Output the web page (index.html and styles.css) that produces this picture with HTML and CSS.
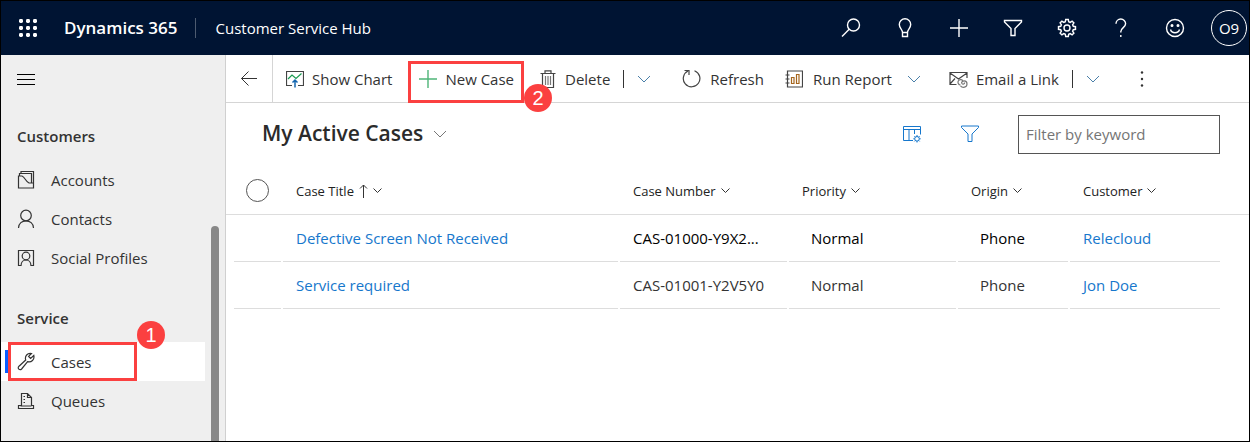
FILE: index.html
```html
<!DOCTYPE html>
<html lang="en">
<head>
<meta charset="utf-8">
<title>My Active Cases - Customer Service Hub</title>
<link rel="stylesheet" href="styles.css">
</head>
<body>
<div class="app">
  <header class="topbar">
    <button class="waffle" aria-label="App launcher">
      <svg width="18" height="18" viewBox="0 0 18 18"><rect x="0" y="0" width="4" height="4" rx="1.4"/><rect x="7" y="0" width="4" height="4" rx="1.4"/><rect x="14" y="0" width="4" height="4" rx="1.4"/><rect x="0" y="7" width="4" height="4" rx="1.4"/><rect x="7" y="7" width="4" height="4" rx="1.4"/><rect x="14" y="7" width="4" height="4" rx="1.4"/><rect x="0" y="14" width="4" height="4" rx="1.4"/><rect x="7" y="14" width="4" height="4" rx="1.4"/><rect x="14" y="14" width="4" height="4" rx="1.4"/></svg>
    </button>
    <a class="brand" href="#">Dynamics 365</a>
    <a class="app-name" href="#">Customer Service Hub</a>
    <nav class="tools" aria-label="Global tools">
      <button class="tool" aria-label="Search"><svg width="20" height="20" viewBox="0 0 20 20"><circle cx="12.5" cy="7" r="6"/><path d="M8.200 11.300 1 18.500"/></svg></button>
      <button class="tool" aria-label="Tips"><svg width="20" height="20" viewBox="0 0 20 20"><path d="M7.500 14.500c0-3.200-3.200-4.300-3.200-8a5.700 5.700 0 0 1 11.400 0c0 3.700-3.200 4.800-3.200 8zM7.500 14.500v4h5v-4"/></svg></button>
      <button class="tool" aria-label="Add"><svg width="20" height="20" viewBox="0 0 20 20"><path d="M10 1v18M1 10h18"/></svg></button>
      <button class="tool" aria-label="Filter"><svg width="20" height="20" viewBox="0 0 20 20"><path d="M1.500 2.500h17v1.500L12 10.500v7H8v-7L1.500 4z"/></svg></button>
      <button class="tool" aria-label="Settings"><svg width="20" height="20" viewBox="0 0 20 20"><path d="M8.700 1.500h2.600l.4 2.200 1.500.7 1.900-1.300 1.800 1.800-1.300 1.900.7 1.500 2.200.4v2.600l-2.200.4-.7 1.500 1.300 1.900-1.800 1.800-1.900-1.300-1.500.7-.4 2.200H8.700l-.4-2.200-1.500-.7-1.900 1.300-1.800-1.800 1.300-1.900-.7-1.500-2.200-.4V8.700l2.200-.4.700-1.500-1.300-1.900 1.800-1.800 1.900 1.300 1.500-.7z"/><circle cx="10" cy="10" r="3"/></svg></button>
      <button class="tool" aria-label="Help"><svg width="20" height="20" viewBox="0 0 20 20"><path d="M5 5.800a4.800 4.800 0 0 1 9.600 0c0 3.700-4.800 4-4.800 7.900v.8M9.800 17v2"/></svg></button>
      <button class="tool" aria-label="Feedback"><svg width="20" height="20" viewBox="0 0 20 20"><circle cx="10" cy="10" r="8.500"/><path d="M5.500 11.500c1.200 4.300 7.800 4.300 9 0"/><circle cx="7" cy="7.500" r=".8" fill="#fff"/><circle cx="13" cy="7.500" r=".8" fill="#fff"/></svg></button>
      <button class="avatar">O9</button>
    </nav>
  </header>

  <div class="body">
    <aside class="sidebar">
      <button class="menu" aria-label="Collapse site map"><svg width="18" height="11" viewBox="0 0 18 11"><path d="M0 .5h18M0 5.500h18M0 10.500h18"/></svg></button>
      <nav>
        <h2 class="group">Customers</h2>
        <a class="nav-item" href="#"><svg width="18" height="20" viewBox="0 0 18 20"><path d="M2.500 6V3.500h1.500V1.500h12.500v12M1.500 6h3.500c3 1 3.500 5.500 7 7h4.500v5h-15zM4 3.500h10.500v10"/></svg>Accounts</a>
        <a class="nav-item" href="#"><svg width="18" height="20" viewBox="0 0 18 20"><circle cx="9" cy="6.500" r="5.300"/><path d="M1.500 19c0-9.600 15-9.600 15 0"/></svg>Contacts</a>
        <a class="nav-item" href="#"><svg width="18" height="20" viewBox="0 0 18 20"><path d="M4 17.500H1.500v-15h15v15H14"/><circle cx="9" cy="8" r="3.800"/><path d="M4 18c0-8 10-8 10 0"/></svg>Social Profiles</a>
        <h2 class="group">Service</h2>
        <a class="nav-item current" href="#"><svg width="18" height="20" viewBox="0 0 18 20"><path d="M2 14.200 8.700 8C7.500 4.200 10.500.6 14.500 1.500L11.600 4.400l2 2 3.200-2.900c1 4.300-2.400 7-6.200 6.200L4.600 17C2.800 18.800-.2 16.400 2 14.200z"/></svg>Cases<span class="badge badge-one">1</span></a>
        <a class="nav-item" href="#"><svg width="18" height="20" viewBox="0 0 18 20"><path d="M4.500 14.500V2.500h6l4 4v8M10.500 2.500v4h4M6.500 5.500H8M6.500 8.500H8M6.500 11.500H8M4.500 14.500h-3v3h15v-3h-2M3.500 15h11"/></svg>Queues</a>
      </nav>
      <div class="scroll-thumb"></div>
    </aside>

    <main class="main">
      <div class="commands">
        <button class="back" aria-label="Back"><svg width="18" height="16" viewBox="0 0 18 16"><path d="M17 7.500H1.500M8.500.5l-7 7 7 7"/></svg></button>
        <button class="cmd chart"><svg width="18" height="18" viewBox="0 0 18 18"><path d="M6 15.500H.5v-14h17v14H12"/><path d="M2 9l4-4 4 3.500 5.500-5" stroke="#1a9a50"/><path d="M9 17.500v-7M6.500 12.500 9 10l2.500 2.500" stroke="#1667b0" stroke-width="1.500"/></svg>Show Chart</button>
        <button class="cmd new-case"><svg width="18" height="18" viewBox="0 0 18 18"><path d="M9 0v18M0 9h18"/></svg>New Case<span class="badge badge-two">2</span></button>
        <button class="cmd delete"><svg width="16" height="18" viewBox="0 0 16 18"><path d="M.5 3.500h15M5 3V.8h6V3M2.500 3.500v14h11v-14"/><path d="M5.500 6v9M8 6v9M10.500 6v9" stroke="#777"/></svg>Delete</button>
        <button class="split divided" aria-label="More delete options"><svg width="14" height="8" viewBox="0 0 14 8"><path d="m1 1 6 6 6-6"/></svg></button>
        <button class="cmd refresh"><svg width="19" height="19" viewBox="0 0 19 19"><path d="M6 2a8.300 8.300 0 1 0 6.500-.3M2.500 1.500H7V6"/></svg>Refresh</button>
        <button class="cmd report"><svg width="18" height="18" viewBox="0 0 18 18"><path d="M2.500 1h15v16h-15zM.5 5h4M.5 9h4M.5 13h4"/><path d="M6.500 7.500h2.500v6H6.500zM11.500 4.500H14v9h-2.500z" stroke="#a5651d"/></svg>Run Report</button>
        <button class="split" aria-label="More reports"><svg width="14" height="8" viewBox="0 0 14 8"><path d="m1 1 6 6 6-6"/></svg></button>
        <button class="cmd email"><svg width="19" height="18" viewBox="0 0 19 18"><path d="M7.500 14.500H1V2.500h17V8M1 3l8.500 6L18 3M1 14l5-5.500"/><path d="M11.500 15a2.700 2.700 0 1 1 2.300-4.400M12.500 13.500c0-3.500 5.500-3.500 5.500.5 0 3.500-4.500 4.300-6.500 1.800M13 13.500c.8 1.200 2.800.5 2.500-1" stroke="#777"/></svg>Email a Link</button>
        <button class="split divided" aria-label="More email options"><svg width="14" height="8" viewBox="0 0 14 8"><path d="m1 1 6 6 6-6"/></svg></button>
        <button class="more" aria-label="More commands"><svg width="4" height="16" viewBox="0 0 4 16"><circle cx="2" cy="1.500" r="1.200"/><circle cx="2" cy="8" r="1.200"/><circle cx="2" cy="14.500" r="1.200"/></svg></button>
      </div>

      <div class="view">
        <h1 class="view-title">My Active Cases</h1>
        <button class="view-menu" aria-label="Change view"><svg width="14" height="8" viewBox="0 0 14 8"><path d="m1 1 6 6 6-6"/></svg></button>
        <button class="view-tool columns" aria-label="Edit columns"><svg width="20" height="20" viewBox="0 0 20 20"><path d="M11 16.500H1.500v-14h17v8M1.500 5.500h17M7 5.500v11M12.500 5.500V10"/><circle cx="15" cy="14.800" r="2.300"/><path d="M15 11v1.500M15 17v1.500M11.300 14.800h1.400M17.300 14.800h1.400M12.400 12.200l1 1M16.600 16.400l1 1M12.400 17.400l1-1M16.600 13.200l1-1"/></svg></button>
        <button class="view-tool" aria-label="Edit filters"><svg width="20" height="20" viewBox="0 0 20 20"><path d="M1.500 2h17v1.500L12 10v7.500H8V10L1.500 3.500z"/></svg></button>
        <input class="keyword" type="text" placeholder="Filter by keyword" aria-label="Filter by keyword">
      </div>

      <table class="grid">
        <colgroup><col class="c-check"><col><col class="c-number"><col class="c-priority"><col class="c-origin"><col class="c-customer"></colgroup>
        <thead>
          <tr>
            <th><input class="round" type="checkbox" aria-label="Select all"></th>
            <th><span class="head">Case Title<svg class="sort" width="9" height="14" viewBox="0 0 9 14"><path d="M4.500 14V1M1 4.500 4.500 1 8 4.500"/></svg><svg width="9" height="6" viewBox="0 0 9 6"><path d="m.5.5 4 4 4-4"/></svg></span></th>
            <th><span class="head">Case Number<svg width="9" height="6" viewBox="0 0 9 6"><path d="m.5.5 4 4 4-4"/></svg></span></th>
            <th><span class="head">Priority<svg width="9" height="6" viewBox="0 0 9 6"><path d="m.5.5 4 4 4-4"/></svg></span></th>
            <th><span class="head">Origin<svg width="9" height="6" viewBox="0 0 9 6"><path d="m.5.5 4 4 4-4"/></svg></span></th>
            <th><span class="head">Customer<svg width="9" height="6" viewBox="0 0 9 6"><path d="m.5.5 4 4 4-4"/></svg></span></th>
          </tr>
        </thead>
        <tbody>
          <tr class="active"><td></td><td><a href="#">Defective Screen Not Received</a></td><td>CAS-01000-Y9X2...</td><td class="choice">Normal</td><td class="choice">Phone</td><td><a href="#">Relecloud</a></td></tr>
          <tr><td></td><td><a href="#">Service required</a></td><td>CAS-01001-Y2V5Y0</td><td class="choice">Normal</td><td class="choice">Phone</td><td><a href="#">Jon Doe</a></td></tr>
        </tbody>
      </table>
    </main>
  </div>
</div>
</body>
</html>
```
FILE: styles.css
```css
* { box-sizing: border-box; }

body {
  margin: 0;
  font: 15px/20px "Open Sans", "Noto Sans", sans-serif;
  color: #333;
  background: #fff;
}

button {
  display: flex;
  align-items: center;
  margin: 0;
  padding: 0;
  border: 0;
  background: none;
  font: inherit;
  color: inherit;
}

a { color: #1677cc; text-decoration: none; }
svg { flex: none; fill: none; stroke: #333; }

.app {
  display: flex;
  flex-direction: column;
  min-height: 100vh;
  border: 1px solid #000;
}

/* Top bar */
.topbar {
  display: flex;
  align-items: center;
  height: 54px;
  padding: 0 2px 0 18px;
  background: #001433;
  color: #fff;
}
.waffle svg { fill: #fff; stroke: none; }
.topbar .brand { margin-left: 27px; padding-right: 18px; color: #fff; font-size: 17px; font-weight: 600; }
.topbar .app-name { padding-left: 19px; border-left: 1px solid #4d5b70; color: #fff; }
.tools { display: flex; align-items: center; margin-left: auto; }
.tool { justify-content: center; width: 54px; height: 54px; }
.tool svg { stroke: #fff; stroke-width: 1.4; }
.avatar {
  justify-content: center;
  width: 36px;
  height: 36px;
  margin-left: 9px;
  border: 1px solid #fff;
  border-radius: 50%;
  font-size: 15px;
}

.body { display: flex; flex: 1; }

/* Site map */
.sidebar {
  position: relative;
  flex: none;
  width: 225px;
  padding-right: 20px;
  border-right: 1px solid #d0d0d0;
  background: #efefef;
}
.menu { height: 48px; padding-left: 16px; }
.menu svg { stroke: #000; }
.group { margin: 29px 0 12px 16px; font-size: 15px; line-height: 24px; font-weight: 600; }
.group:first-child { margin-top: 21px; }
.nav-item {
  position: relative;
  display: flex;
  align-items: center;
  gap: 16px;
  height: 39px;
  padding-left: 16px;
  color: #333;
}
.nav-item svg { stroke-width: 1.2; }
.current { background: #fff; }
.current::before {
  content: "";
  position: absolute;
  left: 4px;
  width: 4px;
  height: 23px;
  background: #0a5cff;
}
.current::after {
  content: "";
  position: absolute;
  inset: 0 68px 0 7px;
  border: 3px solid #fb4040;
}
.scroll-thumb {
  position: absolute;
  top: 171px;
  right: 6px;
  bottom: 0;
  width: 8px;
  border-radius: 4px 4px 0 0;
  background: #888;
}

.badge {
  position: absolute;
  z-index: 1;
  width: 28px;
  height: 28px;
  border-radius: 50%;
  background: #fb4040;
  color: #fff;
  font: 20px/28px "Liberation Sans", sans-serif;
  text-align: center;
}
.badge-one { left: 136px; top: -21px; }
.badge-two { right: -31px; top: 20px; }

/* Command bar */
.main { flex: 1; min-width: 0; }
.commands {
  display: flex;
  align-items: stretch;
  height: 48px;
  border-bottom: 1px solid #d5d5d5;
}
.back { justify-content: center; width: 47px; border-right: 1px solid #d5d5d5; }
.cmd { gap: 8px; margin-left: 16px; white-space: nowrap; }
.cmd svg { stroke: #444; stroke-width: 1.2; }
.chart { margin-left: 13px; }
.new-case {
  position: relative;
  align-self: flex-start;
  height: 42px;
  margin-top: 6px;
  padding: 0 7px 6px 8px;
  border: 3px solid #fb4040;
}
.new-case svg { stroke: #4fb578; stroke-width: 1.4; }
.delete { gap: 9px; }
.refresh { margin-left: 21px; gap: 9px; }
.report { margin-left: 21px; gap: 10px; }
.split { width: 38px; justify-content: center; margin-left: 3px; }
.split svg { stroke: #4a7fa8; }
.view-menu svg { stroke: #777; }
.divided { margin-left: 13px; padding-left: 4px; background: linear-gradient(#333, #333) no-repeat 0 15px / 1px 18px; }
.more { margin-left: 18px; padding: 0 12px; }
.more svg { stroke: none; fill: #333; }

/* View header */
.view { display: flex; align-items: center; height: 64px; padding: 0 29px 2px 36px; }
.view-title { margin: 0 0 3px; font-size: 21px; line-height: 28px; font-weight: 600; color: #2b2b2b; }
.view-menu { margin-left: 10px; }
.view-tool { margin-right: 38px; }
.view-tool svg { stroke: #1677cc; }
.columns { margin-left: auto; }
.keyword {
  width: 202px;
  height: 39px;
  padding: 0 7px;
  border: 1px solid #555;
  font: inherit;
}
.keyword::placeholder { color: #757575; }

/* Case grid */
.grid { width: 100%; table-layout: fixed; border-spacing: 0; }
.c-check { width: 57px; }
.c-number { width: 169px; }
.c-priority { width: 169px; }
.c-origin { width: 112px; }
.c-customer { width: 179px; }
.grid th, .grid td { height: 47px; padding: 0 0 0 13px; text-align: left; white-space: nowrap; }
.grid th { height: 48px; border-bottom: 1px solid #ddd; font-size: 13px; font-weight: 500; color: #222; }
.grid td { padding-bottom: 2px; background: linear-gradient(#ddd, #ddd) no-repeat left bottom / calc(100% - 2px) 1px; }
.grid td:first-child { background-position: 8px 100%; background-size: calc(100% - 10px) 1px; }
.grid td:last-child { background-size: calc(100% - 29px) 1px; }
.grid th:first-child { padding-left: 20px; }
.grid .choice { padding-left: 22px; }
.active { color: #000; }
.head { display: flex; align-items: center; gap: 5px; }
.round {
  display: block;
  appearance: none;
  width: 23px;
  height: 23px;
  margin: 0;
  border: 1px solid #555;
  border-radius: 50%;
}
```
